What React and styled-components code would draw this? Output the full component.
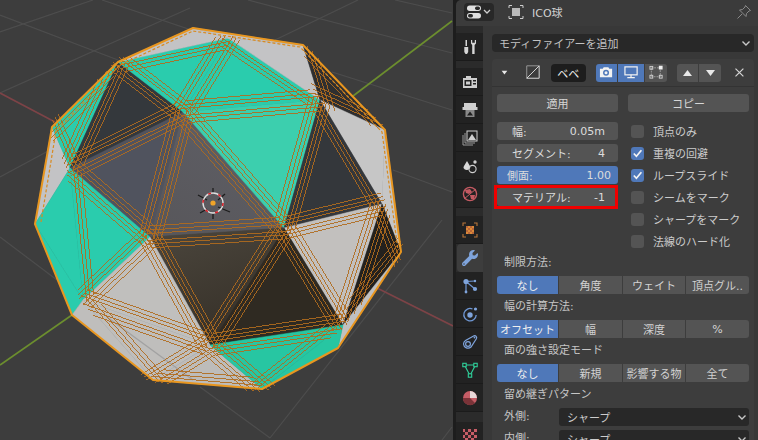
import React from "react";
import styled, { createGlobalStyle } from "styled-components";
import { FaWrench } from "react-icons/fa";

const GlobalStyle = createGlobalStyle`
  html, body { margin: 0; padding: 0; background: #3d3d3d; overflow: hidden; }
  * { box-sizing: border-box; }
`;

const Page = styled.div`
  width: 758px;
  height: 440px;
  display: grid;
  grid-template-columns: 453px 1fr;
  overflow: hidden;
  font-family: "DejaVu Sans", "Noto Sans CJK JP", sans-serif;
  font-size: 11px;
  color: #cccccc;
`;

const ViewportSvg = styled.svg`
  display: block;
  width: 453px;
  height: 440px;
  background: #3d3d3d;
`;

const Editor = styled.div`
  display: flex;
  flex-direction: column;
  height: 440px;
  overflow: hidden;
  background: #1d1d1d;
  padding-left: 3px;
`;

const Header = styled.div`
  flex: 0 0 26px;
  display: flex;
  align-items: center;
  background: #3b3b3b;
  border-top-left-radius: 5px;
  padding: 0 6px 2px 8px;
`;

const TypeButton = styled.div`
  width: 30px;
  height: 18px;
  border-radius: 4px;
  background: #282828;
  display: flex;
  align-items: center;
  justify-content: center;
`;

const ObjectName = styled.div`
  flex: 1;
  display: flex;
  align-items: center;
  gap: 8px;
  margin-left: 14px;
  color: #d2d2d2;
`;

const Body = styled.div`
  flex: 1;
  display: grid;
  grid-template-columns: 27px 1fr;
  min-height: 0;
`;

const TabColumn = styled.div`
  display: flex;
  flex-direction: column;
  background: #2b2b2b;
  padding-top: 7px;
  overflow: hidden;
`;

const TabGroup = styled.div`
  display: flex;
  flex-direction: column;
  margin-bottom: ${(p) => p.$gap}px;
`;

const Tab = styled.div`
  flex: 0 0 28px;
  height: 28px;
  display: flex;
  align-items: center;
  justify-content: center;
  background: ${(p) => (p.$active ? "#3d3d3d" : "#222222")};
  border-bottom: 1px solid ${(p) => (p.$active ? "#3d3d3d" : "#1b1b1b")};
  border-radius: ${(p) => (p.$active ? "4px 0 0 4px" : "0")};
  margin-left: ${(p) => (p.$active ? "1px" : "0")};
`;

const Content = styled.div`
  background: #383838;
  padding: 8px 4px 0 9px;
  overflow: hidden;
`;

const AddSelect = styled.div`
  height: 18px;
  display: flex;
  align-items: center;
  justify-content: space-between;
  border-radius: 4px;
  background: #282828;
  padding: 0 3px 0 7px;
  color: #c2c2c2;
`;

const ModifierPanel = styled.div`
  margin-top: 7px;
  background: #3d3d3d;
  border-radius: 4px 4px 0 0;
  height: 400px;
`;

const ModifierHeader = styled.div`
  height: 28px;
  display: flex;
  align-items: center;
  padding: 0 9px;
  border-bottom: 1px solid #333333;
`;

const NameField = styled.div`
  width: 36px;
  height: 18px;
  margin: 0 10px;
  border-radius: 4px;
  background: #1d1d1d;
  color: #eeeeee;
  display: flex;
  align-items: center;
  justify-content: center;
`;

const IconGroup = styled.div`
  display: flex;
  gap: 1px;
  margin-right: ${(p) => p.$mr || 0}px;
`;

const IconButton = styled.div`
  width: ${(p) => p.$w}px;
  height: 18px;
  display: flex;
  align-items: center;
  justify-content: center;
  background: ${(p) => (p.$on ? "#4f78b9" : "#545454")};
  &:first-child { border-radius: 3px 0 0 3px; }
  &:last-child { border-radius: 0 3px 3px 0; }
`;

const ModifierBody = styled.div`
  padding: 7px 5px 0;
  display: flex;
  flex-direction: column;
  gap: 4px;
`;

const ButtonRow = styled.div`
  display: grid;
  grid-template-columns: 121px 121px;
  gap: 10px;
  margin-bottom: 6px;
`;

const ActionButton = styled.div`
  height: 18px;
  border-radius: 3px;
  background: #545454;
  color: #d6d6d6;
  display: flex;
  align-items: center;
  justify-content: center;
`;

const Columns = styled.div`
  display: grid;
  grid-template-columns: 121px 121px;
  gap: 10px;
`;

const Stack = styled.div`
  display: flex;
  flex-direction: column;
  gap: 4px;
`;

const Field = styled.div`
  position: relative;
  height: 18px;
  border-radius: 3px;
  background: ${(p) => (p.$slider ? "#4f78b9" : "#545454")};
  color: #dcdcdc;
  display: flex;
  align-items: center;
  justify-content: space-between;
  padding: ${(p) => (p.$slider ? "0 7px 0 10px" : "0 13px 0 15px")};
`;

const RedBox = styled.div`
  position: absolute;
  top: -3px;
  bottom: -3px;
  left: -3px;
  right: 0;
  border: 3px solid #f00000;
`;

const CheckRow = styled.div`
  height: 18px;
  display: flex;
  align-items: center;
  gap: 9px;
  padding-left: 3px;
`;

const CheckBox = styled.div`
  width: 13px;
  height: 13px;
  border-radius: 3px;
  background: ${(p) => (p.$on ? "#4f78b9" : "#545454")};
  display: flex;
  align-items: center;
  justify-content: center;
`;

const SectionLabel = styled.div`
  height: 18px;
  line-height: 18px;
  padding-left: 7px;
  color: #c6c6c6;
`;

const Segmented = styled.div`
  display: grid;
  grid-template-columns: 61px 63px 62px 63px;
  gap: 1px;
`;

const Segment = styled.div`
  height: 18px;
  display: flex;
  align-items: center;
  justify-content: center;
  white-space: nowrap;
  background: ${(p) => (p.$on ? "#4f78b9" : "#545454")};
  color: ${(p) => (p.$on ? "#eeeeee" : "#d2d2d2")};
  &:first-child { border-radius: 3px 0 0 3px; }
  &:last-child { border-radius: 0 3px 3px 0; }
`;

const SelectRow = styled.div`
  display: grid;
  grid-template-columns: 62px 190px;
  align-items: center;
`;

const SelectBox = styled.div`
  height: 18px;
  border-radius: 3px;
  background: #282828;
  display: flex;
  align-items: center;
  justify-content: space-between;
  padding: 0 2px 0 8px;
`;

// ---- viewport drawing ----

const V = {
  a: [118, 62], b: [183, 112], c: [70, 168], d: [320, 100], e: [382, 204], f: [284, 228],
  g: [150, 237], h: [83, 300], i: [210, 345], j: [343, 325], k: [401, 252], l: [338, 348],
  m: [262, 389], n: [153, 380], o: [72, 315], p: [35, 224], q: [52, 127], r: [193, 28],
  s: [303, 45], t: [385, 130], w: [228, 38],
};

const TEAL = "#2accad";
const WHITE = "#c3c3c5";

const FACES = [
  ["qcp", WHITE], ["qac", TEAL], ["acb", "#34383c"], ["cbg", "#50535e"], ["bfg", "url(#midGrad)"],
  ["awb", TEAL], ["wdb", TEAL], ["bdf", "#3ccfae"], ["arw", WHITE], ["rsw", WHITE], ["wsd", WHITE],
  ["sdt", "#2f2f30"], ["dte", "#c6c6c6"], ["tke", "#c6c6c6"], ["dfe", "#34373b"], ["fej", "#c2c0be"],
  ["ekj", "#23211e"], ["jkl", "#c0c0c0"], ["fji", "#2f2a22"], ["gfi", "url(#brownGrad)"],
  ["cgh", TEAL], ["chp", TEAL], ["pho", TEAL], ["ghi", "#c0bfbd"], ["hin", "#bfbebc"],
  ["hno", "#bfbebc"], ["imn", "#bdbcba"], ["ijm", "#27c6a2"], ["jlm", "#27c6a2"],
];

// triangles that carry bevel lines, the sliver ones get none
const BEVELLED = [
  "qac", "acb", "cbg", "bfg", "awb", "wdb", "bdf", "sdt", "dfe", "fej", "ekj", "fji", "gfi",
  "cgh", "ghi", "ijm", "imn", "hin",
];

const OUTLINE = ["q", "a", "r", "s", "t", "k", "l", "m", "n", "o", "p"];
const pointsOf = (keys) => keys.map((k) => V[k].join(",")).join(" ");

// parallel bevel lines along every edge of a triangle, run a bit past its corners
function bevelLines(tri) {
  const pts = tri.split("").map((k) => V[k]);
  const out = [];
  for (let n = 0; n < 3; n++) {
    const [x1, y1] = pts[n];
    const [x2, y2] = pts[(n + 1) % 3];
    const [x3, y3] = pts[(n + 2) % 3];
    const len = Math.hypot(x2 - x1, y2 - y1);
    const h = Math.abs((x2 - x1) * (y3 - y1) - (y2 - y1) * (x3 - x1)) / len;
    [3.5, 7, 11].forEach((off) => {
      const t = off / h;
      if (t > 0.35) return;
      const ax = x1 + (x3 - x1) * t;
      const ay = y1 + (y3 - y1) * t;
      const bx = x2 + (x3 - x2) * t;
      const by = y2 + (y3 - y2) * t;
      const ux = (bx - ax) / Math.hypot(bx - ax, by - ay);
      const uy = (by - ay) / Math.hypot(bx - ax, by - ay);
      out.push([ax - ux * 5, ay - uy * 5, bx + ux * 5, by + uy * 5]);
    });
  }
  return out;
}

const GRID = [
  [0, 15, 118, 60], [0, 32, 93, 0], [0, 93, 190, 8], [102, 0, 230, 43], [248, 0, 452, 53],
  [332, 72, 452, 110], [393, 170, 452, 192], [275, 40, 358, 0], [395, 0, 452, 13],
  [0, 177, 50, 150], [0, 237, 57, 280], [200, 387, 270, 438], [442, 220, 270, 438], [452, 427, 442, 440],
];

const CURSOR_TICKS = [
  [-15, -8, -6, -3], [12, -9, 5, -3], [-13, 10, -6, 6], [17, 9, 5, 4], [0, 11, 0, 16], [0, -15, 0, -10],
];

function Viewport() {
  return (
    <ViewportSvg viewBox="0 0 453 440">
      <defs>
        <linearGradient id="midGrad" x1="0.8" y1="0" x2="0.2" y2="1">
          <stop offset="0" stopColor="#5f5f66" />
          <stop offset="1" stopColor="#58575b" />
        </linearGradient>
        <linearGradient id="brownGrad" x1="0.2" y1="0" x2="0.6" y2="1">
          <stop offset="0" stopColor="#4a453c" />
          <stop offset="1" stopColor="#352f27" />
        </linearGradient>
      </defs>
      {GRID.map((l, n) => (
        <line key={n} x1={l[0]} y1={l[1]} x2={l[2]} y2={l[3]} stroke="#4d4d4d" strokeWidth="1.2" />
      ))}
      <line x1="0" y1="93" x2="55" y2="122" stroke="#7d4347" strokeWidth="1.6" />
      <line x1="375" y1="287" x2="453" y2="326" stroke="#7d4347" strokeWidth="1.6" />
      <line x1="452" y1="21" x2="353" y2="96" stroke="#6c8e2e" strokeWidth="1.6" />
      <line x1="72" y1="315" x2="0" y2="365" stroke="#6c8e2e" strokeWidth="1.6" />

      {FACES.map(([tri, fill]) => (
        <polygon key={tri} points={pointsOf(tri.split(""))} fill={fill} stroke={fill} strokeWidth="0.5" />
      ))}
      <line x1="107" y1="317" x2="193" y2="380" stroke="#a2a2a2" strokeWidth="1.4" />

      <g stroke="#b06c1e" strokeWidth="0.9" shapeRendering="crispEdges">
        {BEVELLED.flatMap(bevelLines).map((l, n) => (
          <line key={n} x1={l[0]} y1={l[1]} x2={l[2]} y2={l[3]} />
        ))}
      </g>

      <polyline
        points="41,222 56,131 120,65 193,31 300,47 382,132 398,250"
        fill="none"
        stroke="#d98a1f"
        strokeWidth="1.2"
        strokeDasharray="3 2"
      />
      <polygon
        points={pointsOf(OUTLINE)}
        fill="none"
        stroke="#e8961f"
        strokeWidth="2"
        strokeLinejoin="round"
      />

      <g transform="translate(213 203)">
        <g stroke="#1c1c1c" strokeWidth="1.3">
          {CURSOR_TICKS.map((t, n) => (
            <line key={n} x1={t[0]} y1={t[1]} x2={t[2]} y2={t[3]} />
          ))}
        </g>
        <circle r="10" fill="none" stroke="#dedede" strokeWidth="1.4" />
        <circle r="10" fill="none" stroke="#d8222a" strokeWidth="1.6" strokeDasharray="3 7.47" />
        <circle r="2.6" fill="#f0a428" />
      </g>
    </ViewportSvg>
  );
}

// ---- icons ----

const Svg = ({ size = 16, children }) => (
  <svg width={size} height={size} viewBox="0 0 16 16" style={{ display: "block" }}>
    {children}
  </svg>
);

const Chevron = ({ color = "#c8c8c8" }) => (
  <svg width="10" height="10" viewBox="0 0 10 10" style={{ display: "block" }}>
    <path d="M1.5 3.5 L5 7 L8.5 3.5" fill="none" stroke={color} strokeWidth="1.4" />
  </svg>
);

const EditorTypeIcon = () => (
  <svg width="26" height="16" viewBox="0 0 26 16" style={{ display: "block" }}>
    <rect x="1" y="1.5" width="14" height="5.5" rx="2.7" fill="#e0e0e0" />
    <rect x="9" y="2.5" width="5" height="3.5" rx="1.7" fill="#282828" />
    <rect x="1" y="9" width="14" height="5.5" rx="2.7" fill="#e0e0e0" />
    <rect x="2" y="10" width="5" height="3.5" rx="1.7" fill="#282828" />
    <path d="M18 6 L21 9 L24 6" fill="none" stroke="#cfcfcf" strokeWidth="1.3" />
  </svg>
);

const ObjectIcon = () => (
  <Svg>
    <path d="M1 4V1.5H4 M12 1.5H15V4 M15 12V14.5H12 M4 14.5H1V12" fill="none" stroke="#cfcfcf" strokeWidth="1" />
    <rect x="4" y="4" width="8" height="8" fill="#b9b9b9" />
  </Svg>
);

const PinIcon = () => (
  <Svg>
    <path d="M9.5 1.5 L14.5 6.5 L13 7 L10.5 9.5 L10 12.5 L3.5 6 L6.5 5.5 L9 3 Z M6 10 L1.5 14.5" fill="none" stroke="#8a8a8a" strokeWidth="1" />
  </Svg>
);

const ToolIcon = () => (
  <Svg>
    <path d="M3.5 1 H5 V7 H3.5 Z" fill="#d6d6d6" />
    <path d="M2.3 8 H6.2 V13 L5 15 H3.5 L2.3 13 Z" fill="#d6d6d6" />
    <path d="M9 1 V4.5 L10.2 6 V15 H12.6 V6 L14 4.5 V1 L12.8 1 V3.8 H10.2 V1 Z" fill="#d6d6d6" />
  </Svg>
);

const RenderIcon = () => (
  <Svg>
    <path d="M4 2 L9 2 L9 4 H15 V14 H1 V4 H4 Z" fill="#cfcfcf" />
    <rect x="2.5" y="6" width="7" height="6" fill="#222" />
    <rect x="4" y="7.5" width="4" height="3" fill="#cfcfcf" />
    <rect x="11" y="6" width="3" height="1.5" fill="#222" />
    <rect x="11" y="9" width="3" height="1.5" fill="#222" />
  </Svg>
);

const OutputIcon = () => (
  <Svg>
    <path d="M2 1 H14 V5 H15.5 V8 H0.5 V5 H2 Z" fill="#cfcfcf" />
    <path d="M3.5 8 H12.5 V15 H3.5 Z" fill="#8a8a8a" />
    <path d="M5 13.5 L8 9.5 L11 13.5 Z" fill="#1f1f1f" />
  </Svg>
);

const ViewLayerIcon = () => (
  <Svg>
    <path d="M1 5 V15 H11 M3 3 V13 H13" fill="none" stroke="#9a9a9a" strokeWidth="1" />
    <rect x="5" y="1" width="10" height="10" fill="none" stroke="#cfcfcf" strokeWidth="1" />
    <path d="M6 10 L10 4 L14 10 Z" fill="#cfcfcf" />
  </Svg>
);

const SceneIcon = () => (
  <Svg>
    <path d="M5 3 L8.5 9 A3.8 3.8 0 0 1 1.5 10 A4 4 0 0 1 2 8 Z" fill="#d8d8d8" />
    <circle cx="10.5" cy="11" r="3.6" fill="none" stroke="#cfcfcf" strokeWidth="1.1" />
    <circle cx="13" cy="4" r="1.7" fill="#cfcfcf" />
  </Svg>
);

const WorldIcon = () => (
  <Svg>
    <circle cx="8" cy="8" r="6.6" fill="none" stroke="#c45a62" strokeWidth="1.4" />
    <path d="M3 4 L8 3 L10 6 L7 8 L4 7 Z M8 9 L13 9 L12 13 L9 13 Z" fill="#c45a62" />
    <path d="M2 13 L14 3" stroke="#c45a62" strokeWidth="1" />
  </Svg>
);

const OrangeObjectIcon = () => (
  <Svg>
    <path d="M1 4V1H4 M12 1H15V4 M15 12V15H12 M4 15H1V12" fill="none" stroke="#b8763a" strokeWidth="1.1" />
    <rect x="4" y="4" width="8" height="8" fill="#dc8a38" />
    <path d="M4 4h2v2H4z M8 4h2v2H8z M6 6h2v2H6z M10 6h2v2h-2z M4 8h2v2H4z M8 8h2v2H8z M6 10h2v2H6z M10 10h2v2h-2z" fill="#b9663a" />
  </Svg>
);

const ParticleIcon = () => (
  <Svg>
    <path d="M4 3.5 L13 3 M4 3.5 L4 14 M4 3.5 L13 11" stroke="#6f97d4" strokeWidth="1.2" fill="none" />
    <circle cx="4" cy="3.5" r="2.6" fill="#7fa4dc" />
    <circle cx="13" cy="11" r="2.1" fill="#7fa4dc" />
    <circle cx="13" cy="3" r="1.2" fill="#7fa4dc" />
    <circle cx="4" cy="14" r="1.4" fill="#7fa4dc" />
  </Svg>
);

const PhysicsIcon = () => (
  <Svg>
    <path d="M10.5 3 A6.2 6.2 0 1 0 14.2 9" fill="none" stroke="#6f97d4" strokeWidth="1.3" />
    <circle cx="8" cy="9" r="2.7" fill="#7fa4dc" />
    <circle cx="13.5" cy="3" r="1.6" fill="#7fa4dc" />
  </Svg>
);

const ConstraintIcon = () => (
  <Svg>
    <path d="M1.5 10 A4.5 4.5 0 0 0 9 13 L14.5 4.5 A2 2 0 0 0 12 1.8 L3.5 6.5 A4.5 4.5 0 0 0 1.5 10 Z" fill="none" stroke="#7fa4dc" strokeWidth="1.2" />
    <circle cx="6" cy="10" r="2.4" fill="none" stroke="#7fa4dc" strokeWidth="1.2" />
    <circle cx="12.5" cy="3.5" r="0.9" fill="#7fa4dc" />
  </Svg>
);

const DataIcon = () => (
  <Svg>
    <path d="M2.5 3 H13.5 L8 13.5 Z" fill="none" stroke="#2fd09a" strokeWidth="1.1" />
    <rect x="0.8" y="1.3" width="3.4" height="3.4" fill="#222" stroke="#2fd09a" strokeWidth="1.1" />
    <rect x="11.8" y="1.3" width="3.4" height="3.4" fill="#222" stroke="#2fd09a" strokeWidth="1.1" />
    <rect x="6.3" y="11.8" width="3.4" height="3.4" fill="#222" stroke="#2fd09a" strokeWidth="1.1" />
  </Svg>
);

const MaterialIcon = () => (
  <Svg>
    <circle cx="8" cy="8" r="7" fill="#c65d66" />
    <path d="M8 8 V1 A7 7 0 0 1 15 8 Z" fill="#e8d8d8" />
    <path d="M1 8 H8 L13 13 A7 7 0 0 1 1 8 Z" fill="#7a3338" />
  </Svg>
);

const TextureIcon = () => (
  <Svg>
    <rect x="1" y="1" width="14" height="14" fill="#c65d66" />
    <path d="M3 1h3v3H3z M9 1h3v3H9z M1 4h2v3H1z M6 4h3v3H6z M12 4h3v3h-3z M3 7h3v3H3z M9 7h3v3H9z M1 10h2v3H1z M6 10h3v3H6z M12 10h3v3h-3z" fill="#2e2224" />
  </Svg>
);

const BevelIcon = () => (
  <Svg size={15}>
    <path d="M0.8 14.2 V0.8 H14.2" fill="none" stroke="#9c9c9c" strokeWidth="1" />
    <path d="M0.8 14.2 H14.2 V0.8 Z" fill="none" stroke="#e2e2e2" strokeWidth="1" />
  </Svg>
);

const CameraIcon = () => (
  <Svg size={15}>
    <path d="M1 4 H4 L5 2.5 H10 L11 4 H14 V13 H1 Z" fill="#f2f2f2" />
    <circle cx="7.5" cy="8.3" r="3.2" fill="#4f78b9" />
    <circle cx="7.5" cy="8.3" r="1.6" fill="#f2f2f2" />
  </Svg>
);

const MonitorIcon = () => (
  <Svg size={15}>
    <rect x="1" y="2" width="13" height="8.5" fill="none" stroke="#f2f2f2" strokeWidth="1.3" />
    <path d="M7.5 10.5 V13 M3.5 13.5 H11.5" stroke="#f2f2f2" strokeWidth="1.3" />
  </Svg>
);

const EditModeIcon = () => (
  <Svg size={15}>
    <rect x="2.5" y="3" width="9.5" height="9.5" fill="none" stroke="#b0b0b0" strokeWidth="0.8" strokeDasharray="2 1" />
    <rect x="1" y="1.5" width="3" height="3" fill="none" stroke="#d0d0d0" strokeWidth="1" />
    <rect x="10.5" y="0.8" width="4" height="4" fill="#f0f0f0" />
    <rect x="1" y="11" width="3" height="3" fill="none" stroke="#d0d0d0" strokeWidth="1" />
    <rect x="11" y="11" width="3" height="3" fill="none" stroke="#d0d0d0" strokeWidth="1" />
  </Svg>
);

const Triangle = ({ down, width = 11 }) => (
  <svg width={width} height={(width * 8) / 11} viewBox="0 0 11 8" style={{ display: "block" }}>
    <path d={down ? "M1 1 H10 L5.5 7 Z" : "M1 7 H10 L5.5 1 Z"} fill="#e8e8e8" />
  </svg>
);

const Close = () => (
  <svg width="11" height="11" viewBox="0 0 11 11" style={{ display: "block", marginLeft: 13 }}>
    <path d="M1.5 1.5 L9.5 9.5 M9.5 1.5 L1.5 9.5" stroke="#d6d6d6" strokeWidth="1.2" />
  </svg>
);

const Check = () => (
  <svg width="11" height="11" viewBox="0 0 11 11" style={{ display: "block" }}>
    <path d="M1.8 5.5 L4.4 8.3 L9.4 2.2" fill="none" stroke="#f4f4f4" strokeWidth="1.7" />
  </svg>
);

const CollapseSpacer = styled.span`
  width: 18px;
`;

const FIELDS = [
  { label: "幅:", value: "0.05m" },
  { label: "セグメント:", value: "4" },
  { label: "側面:", value: "1.00", slider: true },
  { label: "マテリアル:", value: "-1", marked: true },
];

const CHECKS = [
  { label: "頂点のみ" },
  { label: "重複の回避", on: true },
  { label: "ループスライド", on: true },
  { label: "シームをマーク" },
  { label: "シャープをマーク" },
  { label: "法線のハード化" },
];

const SECTIONS = [
  { title: "制限方法:", items: ["なし", "角度", "ウェイト", "頂点グル.."] },
  { title: "幅の計算方法:", items: ["オフセット", "幅", "深度", "%"] },
  { title: "面の強さ設定モード", items: ["なし", "新規", "影響する物", "全て"] },
];

function Properties() {
  return (
    <Editor>
      <Header>
        <TypeButton>
          <EditorTypeIcon />
        </TypeButton>
        <ObjectName>
          <ObjectIcon />
          <span>ICO球</span>
        </ObjectName>
        <PinIcon />
      </Header>
      <Body>
        <TabColumn>
          <TabGroup $gap={7}>
            <Tab><ToolIcon /></Tab>
          </TabGroup>
          <TabGroup $gap={8}>
            <Tab><RenderIcon /></Tab>
            <Tab><OutputIcon /></Tab>
            <Tab><ViewLayerIcon /></Tab>
            <Tab><SceneIcon /></Tab>
            <Tab><WorldIcon /></Tab>
          </TabGroup>
          <TabGroup $gap={10}>
            <Tab><OrangeObjectIcon /></Tab>
            <Tab $active><FaWrench size={16} color="#7fa4dc" /></Tab>
            <Tab><ParticleIcon /></Tab>
            <Tab><PhysicsIcon /></Tab>
            <Tab><ConstraintIcon /></Tab>
            <Tab><DataIcon /></Tab>
            <Tab><MaterialIcon /></Tab>
          </TabGroup>
          <TabGroup $gap={0}>
            <Tab><TextureIcon /></Tab>
          </TabGroup>
        </TabColumn>
        <Content>
          <AddSelect>
            <span>モディファイアーを追加</span>
            <Chevron />
          </AddSelect>
          <ModifierPanel>
            <ModifierHeader>
              <Triangle down width={7} />
              <CollapseSpacer />
              <BevelIcon />
              <NameField>ベベ</NameField>
              <IconGroup $mr={10}>
                <IconButton $w={21} $on><CameraIcon /></IconButton>
                <IconButton $w={26} $on><MonitorIcon /></IconButton>
                <IconButton $w={22}><EditModeIcon /></IconButton>
              </IconGroup>
              <IconGroup>
                <IconButton $w={21}><Triangle /></IconButton>
                <IconButton $w={22}><Triangle down /></IconButton>
              </IconGroup>
              <Close />
            </ModifierHeader>
            <ModifierBody>
              <ButtonRow>
                <ActionButton>適用</ActionButton>
                <ActionButton>コピー</ActionButton>
              </ButtonRow>
              <Columns>
                <Stack>
                  {FIELDS.map((f) => (
                    <Field key={f.label} $slider={f.slider}>
                      <span>{f.label}</span>
                      <span>{f.value}</span>
                      {f.marked && <RedBox />}
                    </Field>
                  ))}
                </Stack>
                <Stack>
                  {CHECKS.map((c) => (
                    <CheckRow key={c.label}>
                      <CheckBox $on={c.on}>{c.on && <Check />}</CheckBox>
                      <span>{c.label}</span>
                    </CheckRow>
                  ))}
                </Stack>
              </Columns>
              {SECTIONS.map((s) => (
                <React.Fragment key={s.title}>
                  <SectionLabel>{s.title}</SectionLabel>
                  <Segmented>
                    {s.items.map((item, n) => (
                      <Segment key={item} $on={n === 0}>{item}</Segment>
                    ))}
                  </Segmented>
                </React.Fragment>
              ))}
              <SectionLabel>留め継ぎパターン</SectionLabel>
              <SelectRow>
                <SectionLabel>外側:</SectionLabel>
                <SelectBox>
                  <span>シャープ</span>
                  <Chevron />
                </SelectBox>
              </SelectRow>
              <SelectRow>
                <SectionLabel>内側:</SectionLabel>
                <SelectBox>
                  <span>シャープ</span>
                  <Chevron />
                </SelectBox>
              </SelectRow>
            </ModifierBody>
          </ModifierPanel>
        </Content>
      </Body>
    </Editor>
  );
}

export default function App() {
  return (
    <Page>
      <GlobalStyle />
      <Viewport />
      <Properties />
    </Page>
  );
}
